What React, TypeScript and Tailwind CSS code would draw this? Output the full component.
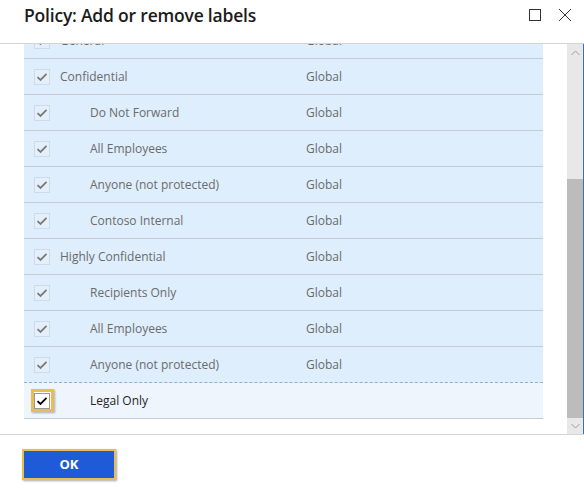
import React from 'react';

const rows = [
  { name: 'General', level: 0 },
  { name: 'Confidential', level: 0 },
  { name: 'Do Not Forward', level: 1 },
  { name: 'All Employees', level: 1 },
  { name: 'Anyone (not protected)', level: 1 },
  { name: 'Contoso Internal', level: 1 },
  { name: 'Highly Confidential', level: 0 },
  { name: 'Recipients Only', level: 1 },
  { name: 'All Employees', level: 1 },
  { name: 'Anyone (not protected)', level: 1 },
];

const Check = ({ color }: { color: string }) => (
  <svg width="12" height="12" viewBox="0 0 12 12" fill="none">
    <path d="M1.5 6.2 L4.5 9 L10.5 2.8" stroke={color} strokeWidth="1.8" />
  </svg>
);

const App = () => {
  return (
    <div className="w-[584px] h-[488px] bg-white flex flex-col overflow-hidden font-['Open_Sans','Noto_Sans',sans-serif]">
      {/* Header */}
      <div className="h-[44px] flex items-start border-b border-[#d4d4d4] pl-[24px] pr-[12px] pt-[3px]">
        <h1 className="flex-1 text-[17.5px] leading-[24px] font-semibold text-[#1b1b1b] tracking-[-0.2px]">
          Policy: Add or remove labels
        </h1>
        <div className="flex items-center gap-[17px] pt-[5px]">
          <div className="w-[12px] h-[12px] border border-[#333]" />
          <svg width="14" height="14" viewBox="0 0 14 14">
            <path d="M1 1 L13 13 M13 1 L1 13" stroke="#333" strokeWidth="1" />
          </svg>
        </div>
      </div>

      {/* Body */}
      <div className="h-[390px] flex">
        <div className="flex-1 overflow-hidden pl-[24px] pr-[24px]">
          <div className="-mt-[21px]">
            {rows.map((r, i) => (
              <div
                key={i}
                className={
                  i === rows.length - 1
                    ? 'h-[36px] flex items-center bg-[#deeefc] border-b border-dashed border-[#8fb0c6] text-[12px] text-[#6b6b6b]'
                    : 'h-[36px] flex items-center bg-[#deeefc] border-b border-[#c4ccd4] text-[12px] text-[#6b6b6b]'
                }
              >
                <div className="w-[36px] flex justify-center">
                  <div className="w-[16px] h-[16px] border border-[#d0dbe6] bg-[#e3f0fc] flex items-center justify-center">
                    <Check color="#7a7a7a" />
                  </div>
                </div>
                <div className={r.level === 0 ? 'w-[246px] pt-[1px]' : 'w-[246px] pl-[30px] pt-[1px]'}>{r.name}</div>
                <div className="pt-[1px]">Global</div>
              </div>
            ))}
            <div className="h-[36px] flex items-center bg-[#eef5fd] border-b border-[#c4ccd4] text-[12px] text-[#262626]">
              <div className="w-[36px] flex justify-center">
                <div className="w-[23px] h-[23px] border-[3px] border-[#e9bd55] bg-white flex items-center justify-center shadow-[1px_1px_2px_rgba(0,0,0,0.3)]">
                  <div className="w-[16px] h-[16px] border border-[#999] flex items-center justify-center">
                    <Check color="#000" />
                  </div>
                </div>
              </div>
              <div className="w-[246px] pl-[30px] pt-[1px]">Legal Only</div>
            </div>
          </div>
        </div>
        {/* Scrollbar */}
        <div className="w-[16px] bg-[#e8e8e8] flex flex-col">
          <div className="h-[17px] flex items-center justify-center">
            <svg width="9" height="6" viewBox="0 0 9 6">
              <path d="M0.5 5 L4.5 1 L8.5 5" stroke="#a0a0a0" fill="none" />
            </svg>
          </div>
          <div className="h-[118px]" />
          <div className="h-[239px] bg-[#bcbcbc]" />
          <div className="flex-1 flex items-center justify-center">
            <svg width="9" height="6" viewBox="0 0 9 6">
              <path d="M0.5 1 L4.5 5 L8.5 1" stroke="#a0a0a0" fill="none" />
            </svg>
          </div>
        </div>
        <div className="w-[1px] bg-[#3b6fb6]" />
      </div>

      {/* Footer */}
      <div className="flex-1 border-t border-[#d4d4d4] pl-[22px] pt-[14px]">
        <div className="w-[94px] h-[31px] border-[2px] border-[#e9bd55] bg-[#1f5bd8] flex items-center justify-center shadow-[1px_1px_2px_rgba(0,0,0,0.35)]">
          <span className="text-white text-[13px] font-bold">OK</span>
        </div>
      </div>
    </div>
  );
};

export default App;
